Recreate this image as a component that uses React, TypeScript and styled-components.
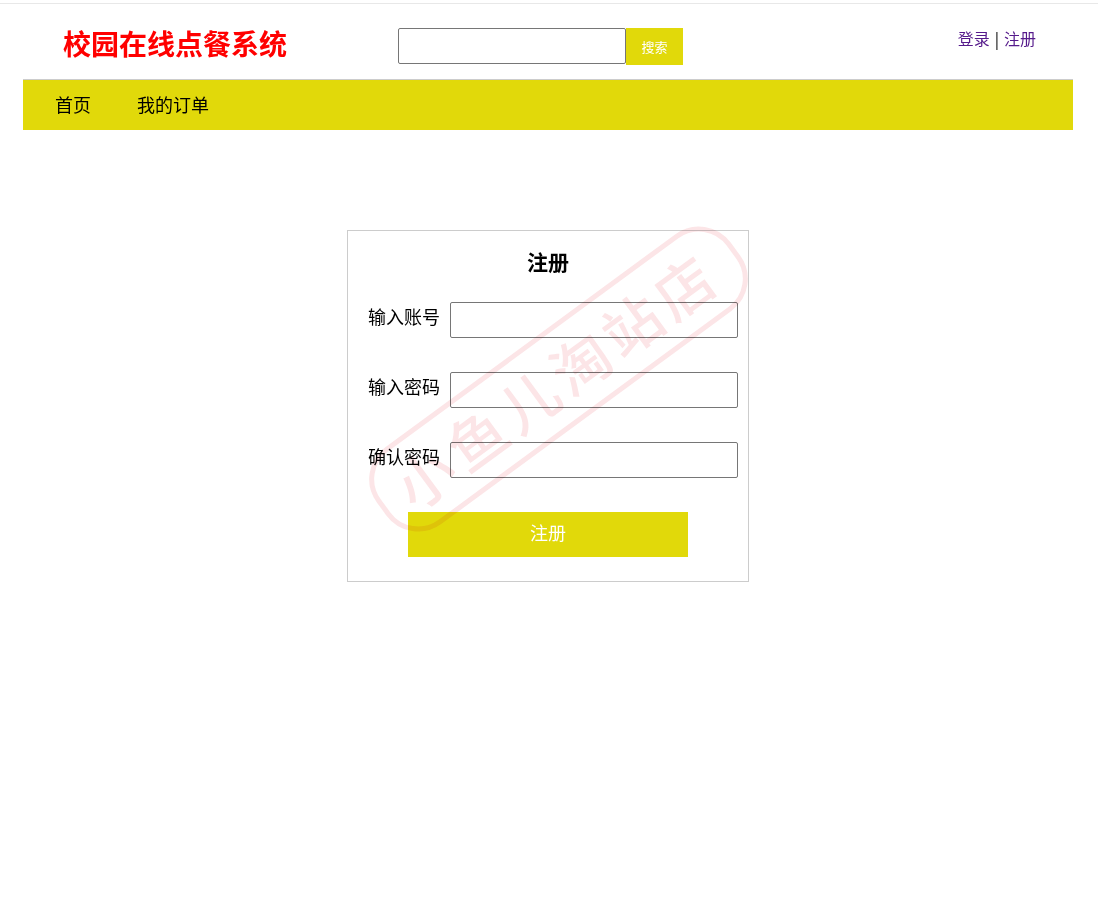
import React from 'react';
import styled, { createGlobalStyle } from 'styled-components';

const yellow = '#e1d90a';

const GlobalStyle = createGlobalStyle`
  * {
    box-sizing: border-box;
  }

  body {
    margin: 0;
    background: #fff;
    color: #000;
    font-family: 'Noto Sans CJK SC', sans-serif;
    font-size: 16px;
    line-height: 20px;
  }

  button,
  input {
    font-family: inherit;
  }
`;

const Page = styled.div`
  padding-top: 3px;
`;

const TopRule = styled.div`
  height: 1px;
  background: #e8e8e8;
`;

const Content = styled.div`
  padding: 0 25px 0 23px;
`;

const Header = styled.header`
  display: grid;
  grid-template-columns: 5fr 9fr;
  align-items: start;
  height: 75px;
  padding-top: 24px;
`;

const SiteTitle = styled.h1`
  margin: 0;
  padding-left: 40px;
  color: #f00;
  font-size: 28px;
  line-height: 30px;
  white-space: nowrap;
`;

const HeaderTools = styled.div`
  display: flex;
  justify-content: space-between;
  align-items: flex-start;
  padding-right: 37px;
`;

const SearchForm = styled.form`
  display: flex;
  align-items: flex-start;
`;

const TextInput = styled.input<{ $width: number }>`
  width: ${({ $width }) => $width}px;
  height: 36px;
  padding: 0 8px;
  border: 1px solid #767676;
  border-radius: 2px;
  background: #fff;
  font-size: 16px;
`;

const Button = styled.button<{ $large?: boolean }>`
  width: ${({ $large }) => ($large ? '280px' : '57px')};
  height: ${({ $large }) => ($large ? '45px' : '37px')};
  padding: ${({ $large }) => ($large ? '0 0 6px' : '0')};
  border: 0;
  background: ${yellow};
  color: #fff;
  font-size: ${({ $large }) => ($large ? '18px' : '13px')};
  cursor: pointer;
`;

const AccountLinks = styled.div`
  display: flex;
  gap: 5px;
`;

const AccountLink = styled.a`
  color: #551a8b;
  text-decoration: none;
`;

const Nav = styled.nav`
  display: flex;
  align-items: center;
  gap: 46px;
  height: 51px;
  padding: 0 0 2px 32px;
  border-top: 1px solid #ccc;
  background: ${yellow};
`;

const NavLink = styled.a`
  color: #000;
  font-size: 18px;
  text-decoration: none;
`;

const Card = styled.form`
  position: relative;
  display: flex;
  flex-direction: column;
  align-items: center;
  width: 402px;
  margin: 100px auto 0;
  padding: 16px 10px 24px;
  border: 1px solid #ccc;
`;

const CardTitle = styled.h2`
  margin: 0 0 27px;
  font-size: 21px;
  line-height: 28px;
`;

const Field = styled.div`
  display: flex;
  align-items: flex-start;
  justify-content: flex-end;
  gap: 10px;
  width: 100%;
  margin-bottom: 34px;
`;

const FieldLabel = styled.label`
  font-size: 18px;
  line-height: 28px;
  white-space: nowrap;
`;

const Watermark = styled.svg`
  position: absolute;
  top: 0;
  left: 0;
  overflow: visible;
  opacity: 0.11;
  mix-blend-mode: multiply;
  pointer-events: none;
`;

const fields = [
  { id: 'account', label: '输入账号', type: 'text' },
  { id: 'password', label: '输入密码', type: 'password' },
  { id: 'confirm', label: '确认密码', type: 'password' },
];

const Stamp = () => (
  <Watermark width="400" height="350" viewBox="0 0 400 350" aria-hidden="true">
    <g transform="translate(210.5 148) rotate(-36.3)">
      <rect
        x="-217"
        y="-45"
        width="434"
        height="90"
        rx="37"
        fill="none"
        stroke="#e01020"
        strokeWidth="5"
      />
      <text
        x="-166 -101 -37 27 91 155"
        y="23"
        textAnchor="middle"
        fontFamily="'Noto Sans CJK SC', sans-serif"
        fontSize="58"
        fontWeight="500"
        fill="#e01020"
      >
        小鱼儿淘站店
      </text>
    </g>
  </Watermark>
);

export default function App() {
  return (
    <>
      <GlobalStyle />
      <Page>
        <TopRule />
        <Content>
          <Header>
            <SiteTitle>校园在线点餐系统</SiteTitle>
            <HeaderTools>
              <SearchForm onSubmit={(e) => e.preventDefault()}>
                <TextInput $width={228} type="text" name="q" aria-label="搜索" />
                <Button type="submit">搜索</Button>
              </SearchForm>
              <AccountLinks>
                <AccountLink href="#login">登录</AccountLink>
                <span>|</span>
                <AccountLink href="#register">注册</AccountLink>
              </AccountLinks>
            </HeaderTools>
          </Header>
          <Nav>
            <NavLink href="#home">首页</NavLink>
            <NavLink href="#orders">我的订单</NavLink>
          </Nav>
          <Card onSubmit={(e) => e.preventDefault()}>
            <CardTitle>注册</CardTitle>
            {fields.map((field) => (
              <Field key={field.id}>
                <FieldLabel htmlFor={field.id}>{field.label}</FieldLabel>
                <TextInput $width={288} id={field.id} name={field.id} type={field.type} />
              </Field>
            ))}
            <Button $large type="submit">
              注册
            </Button>
            <Stamp />
          </Card>
        </Content>
      </Page>
    </>
  );
}
